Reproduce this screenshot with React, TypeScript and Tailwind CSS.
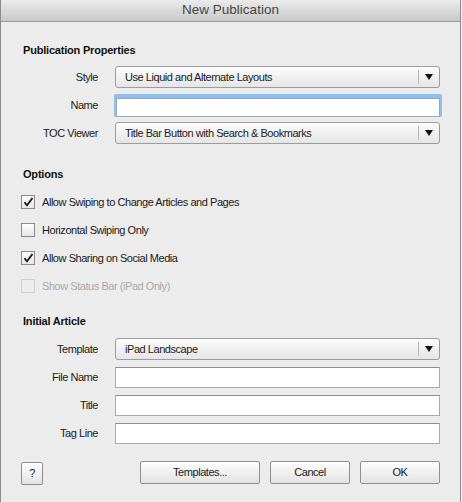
import React, { useState } from "react"

const font = { fontFamily: '"Liberation Sans", Arial, sans-serif' }

function Select({ value }: { value: string }) {
    return (
        <div className="flex h-[22px] w-[325px] items-center rounded-[3px] border border-[#9c9c9c] bg-gradient-to-b from-[#fdfdfd] to-[#e5e5e5]">
            <span className="flex-1 pl-[9px] text-[11px] tracking-[-0.45px] text-[#1a1a1a]">{value}</span>
            <span className="h-[14px] w-px bg-[#b4b4b4]" />
            <span className="flex w-[20px] justify-center">
                <svg width="8" height="6" viewBox="0 0 8 6">
                    <path d="M0 0 H8 L4 6 Z" fill="#111" />
                </svg>
            </span>
        </div>
    )
}

function TextField({ focused }: { focused?: boolean }) {
    if (focused) {
        return (
            <div className="-ml-px h-[23px] w-[328px] rounded-[2px] bg-[#8cc0ee] p-[2px]">
                <input className="h-full w-full border border-[#9aa8b6] bg-white outline-none" />
            </div>
        )
    }
    return (
        <input className="h-[21px] w-[325px] border border-[#a9a9a9] border-t-[#8e8e8e] bg-white outline-none" />
    )
}

function Row({ label, children }: { label: string; children: React.ReactNode }) {
    return (
        <div className="flex h-[22px] items-center">
            <span className="w-[75px] shrink-0 text-right text-[11px] tracking-[-0.45px] text-[#1a1a1a]">{label}</span>
            <div className="ml-[17px] flex items-center">{children}</div>
        </div>
    )
}

function Check({ label, checked, disabled }: { label: string; checked: boolean; disabled?: boolean }) {
    const [on, setOn] = useState(checked)
    return (
        <div className="-ml-[2px] flex h-[14px] items-center" onClick={() => !disabled && setOn(!on)}>
            <span
                className={
                    disabled
                        ? "flex h-[14px] w-[14px] items-center justify-center border border-[#d0d0d0] bg-[#ededed]"
                        : "flex h-[14px] w-[14px] items-center justify-center border border-[#8a8a8a] bg-gradient-to-b from-[#ffffff] to-[#e6e6e6]"
                }
            >
                {on && (
                    <svg width="11" height="10" viewBox="0 0 11 10">
                        <path d="M1.5 5.2 L4 8.3 L9.5 1" fill="none" stroke="#111" strokeWidth="1.8" />
                    </svg>
                )}
            </span>
            <span
                className={
                    disabled
                        ? "ml-[7px] text-[11px] tracking-[-0.45px] text-[#a9a9a9]"
                        : "ml-[7px] text-[11px] tracking-[-0.45px] text-[#1a1a1a]"
                }
            >
                {label}
            </span>
        </div>
    )
}

function Btn({ children, w }: { children: React.ReactNode; w: string }) {
    return (
        <button
            className={`${w} h-[23px] rounded-[2px] border border-[#8f8f8f] bg-gradient-to-b from-[#fdfdfd] to-[#e3e3e3] text-[11px] tracking-[-0.45px] text-[#1a1a1a]`}
        >
            {children}
        </button>
    )
}

export default function App() {
    return (
        <div className="h-[502px] w-[462px] overflow-hidden bg-[#f2f2f2]" style={font}>
            <div className="h-[502px] w-[461px] border-x border-[#8c8c8c] bg-[#ececec]">
                <div className="flex h-[22px] items-center justify-center border-b border-[#999] bg-gradient-to-b from-[#ebebeb] to-[#c9c9c9] text-[13.5px] text-[#454545]">
                    New Publication
                </div>

                <div className="pl-[22px] pr-[18px] pt-[21px]">
                    <div className="h-[14px] text-[11px] font-bold leading-[14px] tracking-[-0.2px] text-[#111]">
                        Publication Properties
                    </div>

                    <div className="mt-[9px] flex flex-col gap-[6px]">
                        <Row label="Style">
                            <Select value="Use Liquid and Alternate Layouts" />
                        </Row>
                        <Row label="Name">
                            <TextField focused />
                        </Row>
                        <Row label="TOC Viewer">
                            <Select value="Title Bar Button with Search & Bookmarks" />
                        </Row>
                    </div>

                    <div className="mt-[23px] h-[14px] text-[11px] font-bold leading-[14px] tracking-[-0.2px] text-[#111]">
                        Options
                    </div>

                    <div className="mt-[14px] flex flex-col gap-[14px]">
                        <Check label="Allow Swiping to Change Articles and Pages" checked />
                        <Check label="Horizontal Swiping Only" checked={false} />
                        <Check label="Allow Sharing on Social Media" checked />
                        <Check label="Show Status Bar (iPad Only)" checked={false} disabled />
                    </div>

                    <div className="mt-[21px] h-[14px] text-[11px] font-bold leading-[14px] tracking-[-0.2px] text-[#111]">
                        Initial Article
                    </div>

                    <div className="mt-[10px] flex flex-col gap-[6px]">
                        <Row label="Template">
                            <Select value="iPad Landscape" />
                        </Row>
                        <Row label="File Name">
                            <TextField />
                        </Row>
                        <Row label="Title">
                            <TextField />
                        </Row>
                        <Row label="Tag Line">
                            <TextField />
                        </Row>
                    </div>

                    <div className="mt-[16px] flex items-center">
                        <div className="-ml-[2px]">
                            <Btn w="w-[22px]">?</Btn>
                        </div>
                        <div className="flex-1" />
                        <div className="mr-[2px] flex gap-[10px]">
                            <Btn w="w-[120px]">Templates...</Btn>
                            <Btn w="w-[80px]">Cancel</Btn>
                            <Btn w="w-[80px]">OK</Btn>
                        </div>
                    </div>
                </div>
            </div>
        </div>
    )
}
